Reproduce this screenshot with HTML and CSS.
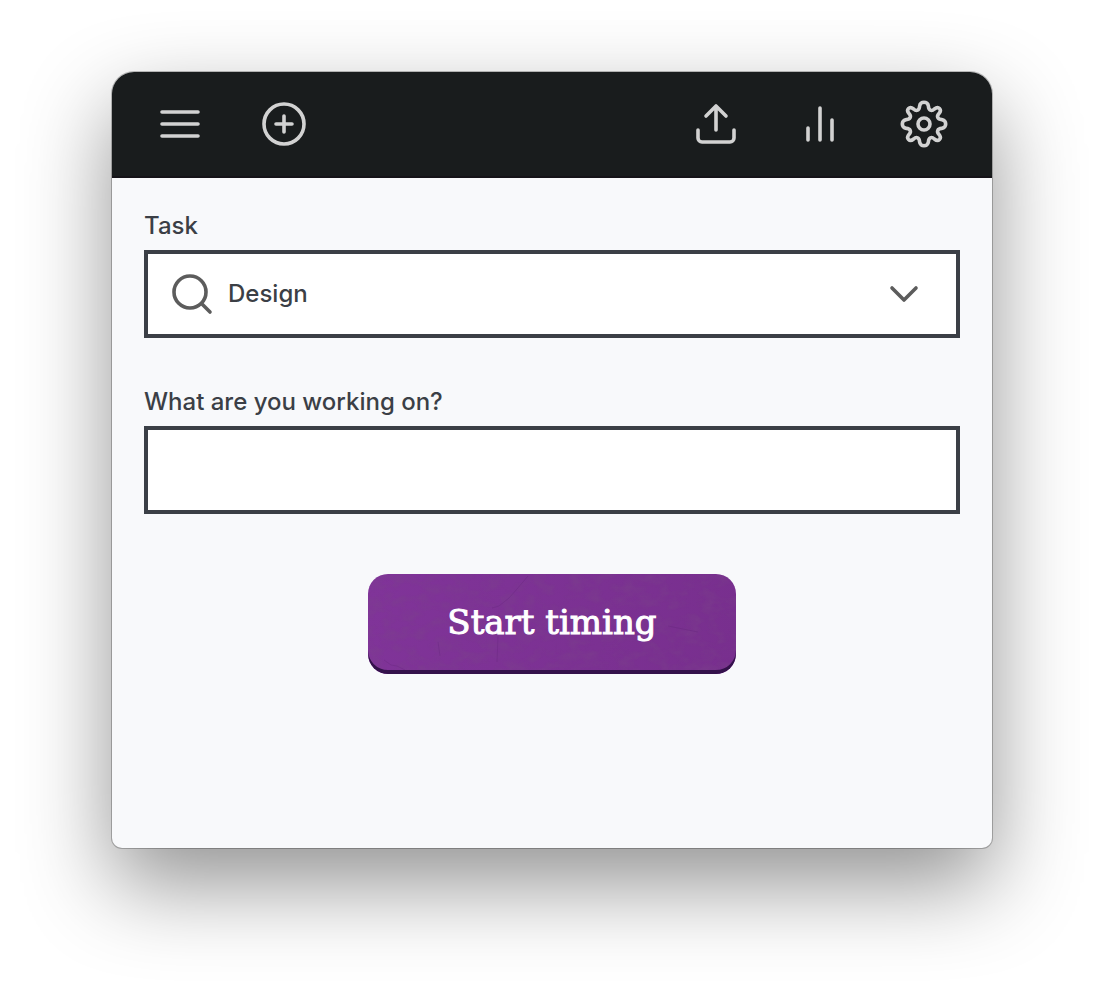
FILE: index.html
```html
<!DOCTYPE html>
<html lang="en">
<head>
<meta charset="utf-8">
<title>Timer</title>
<link rel="stylesheet" href="styles.css">
</head>
<body>
<main class="window">
  <header class="toolbar">
    <button class="tool" type="button" aria-label="Menu">
      <svg class="icon" viewBox="0 0 48 48" stroke-width="3.6"><path d="M6 12h36M6 24h36M6 36h36"/></svg>
    </button>
    <button class="tool" type="button" aria-label="Add">
      <svg class="icon" viewBox="0 0 48 48" stroke-width="3.6"><circle cx="24" cy="24" r="20"/><path d="M24 16v16M16 24h16"/></svg>
    </button>
    <span class="spacer"></span>
    <button class="tool" type="button" aria-label="Export">
      <svg class="icon" viewBox="0 0 48 48" stroke-width="3.6"><path d="M24 30V6M14 16L24 6l10 10M6 30v8a4 4 0 0 0 4 4h28a4 4 0 0 0 4-4v-8"/></svg>
    </button>
    <button class="tool" type="button" aria-label="Reports">
      <svg class="icon" viewBox="0 0 48 48" stroke-width="3.6"><path d="M12 28v12M24 8v32M36 20v20"/></svg>
    </button>
    <button class="tool" type="button" aria-label="Settings">
      <svg class="icon" viewBox="0 0 48 48" stroke-width="3.6"><circle cx="24" cy="24" r="6"/><path d="M19.600 6.200C20 1 28 1 28.400 6.200C28.700 10.500 31.500 11.700 34.400 9C38.500 5.600 42.400 9.500 39 13.600C36.300 16.500 37.500 19.300 41.800 19.600C47 20 47 28 41.800 28.400C37.500 28.700 36.300 31.500 39 34.400C42.400 38.500 38.500 42.400 34.400 39C31.500 36.300 28.700 37.500 28.400 41.800C28 47 20 47 19.600 41.800C19.300 37.500 16.500 36.300 13.600 39C9.500 42.400 5.600 38.500 9 34.400C11.700 31.500 10.500 28.700 6.200 28.400C1 28 1 20 6.200 19.600C10.500 19.300 11.700 16.500 9 13.600C5.600 9.500 9.500 5.600 13.600 9C16.500 11.700 19.300 10.500 19.600 6.200Z"/></svg>
    </button>
  </header>
  <form class="form">
    <div class="field">
      <label class="label" for="task">Task</label>
      <div class="picker">
        <select class="control select" id="task"><option>Design</option></select>
        <svg class="picker-icon" viewBox="0 0 48 48" stroke-width="3.6"><circle cx="22" cy="22" r="16"/><path d="M34 34l8 8"/></svg>
        <svg class="picker-icon picker-arrow" viewBox="0 0 48 48" stroke-width="3.6"><path d="M12 18l12 12 12-12"/></svg>
      </div>
    </div>
    <div class="field">
      <label class="label" for="note">What are you working on?</label>
      <input class="control" id="note" type="text">
    </div>
    <button class="start" type="button">
      <svg class="texture" viewBox="0 0 368 100" preserveAspectRatio="none" aria-hidden="true">
        <filter id="grain" x="0" y="0" width="100%" height="100%"><feTurbulence type="fractalNoise" baseFrequency=".06 .09" numOctaves="5" seed="8"/><feColorMatrix values="0 0 0 0 .2  0 0 0 0 .06  0 0 0 0 .25  0 0 0 2.4 -1"/></filter>
        <rect width="368" height="100" filter="url(#grain)"/>
        <path class="crack" d="M160 2l-11 13-8 9-10 8-7 2M130 62l-1 26M16 86l7 5 6 1 8 4M70 68l2 14M300 52l30 6"/>
      </svg>
      <span class="start-text">Start timing</span>
    </button>
  </form>
</main>
</body>
</html>
```
FILE: styles.css
```css
* { box-sizing: border-box; }

body {
  margin: 0;
  min-height: 100vh;
  display: flex;
  padding: 72px 112px 148px;
  background: #fff;
  color: #3b3f46;
  font-family: Inter, "Liberation Sans", sans-serif;
  font-size: 24px;
  font-weight: 450;
}

.window {
  flex: 1;
  min-width: 0;
  border-radius: 22px 22px 10px 10px;
  background: #f8f9fb;
  box-shadow: 0 0 0 1px rgba(0, 0, 0, .24), 0 36px 88px rgba(0, 0, 0, .43);
}

.toolbar {
  display: flex;
  align-items: center;
  gap: 56px;
  padding: 28px 44px;
  background: #191c1d;
  border-bottom: 2px solid #151318;
  border-radius: 22px 22px 0 0;
}

.spacer { flex: 1; }

.tool {
  display: block;
  padding: 0;
  border: 0;
  background: none;
  color: #d2d2d2;
}

.icon, .picker-icon {
  display: block;
  width: 48px;
  height: 48px;
  fill: none;
  stroke: currentColor;
  stroke-linecap: round;
  stroke-linejoin: round;
}

.form {
  display: flex;
  flex-direction: column;
  padding: 32px;
}

.field { margin-bottom: 48px; }

.label {
  display: block;
  line-height: 32px;
  margin-bottom: 8px;
}

.control {
  display: block;
  width: 100%;
  height: 88px;
  padding: 0 24px;
  border: 4px solid #3b3f46;
  border-radius: 0;
  background: #fff;
  color: inherit;
  font: inherit;
}

.picker { position: relative; }

.select {
  appearance: none;
  padding: 0 80px 2px;
}

.picker-icon {
  position: absolute;
  top: 20px;
  left: 24px;
  color: #5c5c5c;
  pointer-events: none;
}

.picker-arrow {
  left: auto;
  right: 32px;
}

.start {
  position: relative;
  overflow: hidden;
  align-self: center;
  width: 368px;
  height: 100px;
  margin-top: 12px;
  padding: 0 0 4px;
  border: 0;
  border-radius: 20px;
  background: linear-gradient(100deg, #803499, #782f8e);
  color: #fff;
  font: 34px "DejaVu Serif", serif;
}

.start::after {
  content: "";
  position: absolute;
  inset: 0;
  border-radius: 20px;
  box-shadow: inset 0 -4px #34124b;
}

.texture {
  position: absolute;
  inset: 0;
  width: 100%;
  height: 100%;
  opacity: .4;
}

.crack {
  fill: none;
  stroke: #5a2170;
  stroke-width: 1;
  opacity: .6;
}

.start-text {
  position: relative;
  -webkit-text-stroke: 1px #fff;
}
```
